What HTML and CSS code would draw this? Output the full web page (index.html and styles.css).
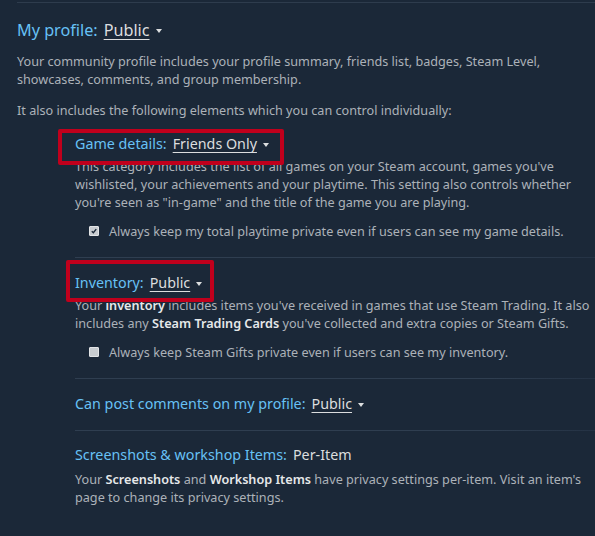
FILE: index.html
```html
<!DOCTYPE html>
<html>
<head>
<meta charset="utf-8">
<link rel="stylesheet" href="styles.css">
</head>
<body>
<div class="page">
  <div class="toprule"></div>
  <h1 class="title"><span class="label">My profile:</span> <span class="value link">Public</span><span class="caret"></span></h1>
  <p class="text p1">Your community profile includes your profile summary, friends list, badges, Steam Level, showcases, comments, and group membership.</p>
  <p class="text p2">It also includes the following elements which you can control individually:</p>

  <div class="sub">
    <div class="item">
      <div class="head"><span class="label">Game details:</span> <span class="value link">Friends Only</span><span class="caret"></span></div>
      <p class="text desc">This category includes the list of all games on your Steam account, games you've wishlisted, your achievements and your playtime. This setting also controls whether you're seen as "in-game" and the title of the game you are playing.</p>
      <label class="check"><span class="box checked"><svg viewBox="0 0 10 10" width="10" height="10"><path d="M2.2 5.3 L4.2 7.2 L7.8 2.6" fill="none" stroke="#1b2838" stroke-width="1.8"/></svg></span>Always keep my total playtime private even if users can see my game details.</label>
    </div>
    <div class="sep"></div>
    <div class="item">
      <div class="head"><span class="label">Inventory:</span> <span class="value link">Public</span><span class="caret"></span></div>
      <p class="text desc">Your <b>inventory</b> includes items you've received in games that use Steam Trading. It also includes any <b>Steam Trading Cards</b> you've collected and extra copies or Steam Gifts.</p>
      <label class="check"><span class="box"></span>Always keep Steam Gifts private even if users can see my inventory.</label>
    </div>
    <div class="sep"></div>
    <div class="item">
      <div class="head"><span class="label">Can post comments on my profile:</span> <span class="value link">Public</span><span class="caret"></span></div>
    </div>
    <div class="sep sep-last"></div>
    <div class="item">
      <div class="head"><span class="label">Screenshots &amp; workshop Items:</span> <span class="value">Per-Item</span></div>
      <p class="text desc d2">Your <b>Screenshots</b> and <b>Workshop Items</b> have privacy settings per-item. Visit an item's page to change its privacy settings.</p>
    </div>
  </div>

  <div class="mark mark1"></div>
  <div class="mark mark2"></div>
</div>
</body>
</html>
```
FILE: styles.css
```css
html, body {
  margin: 0;
  padding: 0;
  background: #1b2838;
}
body {
  font-family: "Noto Sans", "Open Sans", sans-serif;
  width: 595px;
  height: 536px;
  overflow: hidden;
}
.page {
  position: relative;
  padding: 0 5px 0 17px;
}
.toprule {
  height: 1px;
  margin-top: 2px;
  margin-right: -5px;
  background: #2e3c4d;
}
.title {
  margin: 15px 0 0 0;
  font-size: 16.2px;
  line-height: 24px;
  font-weight: normal;
  display: flex;
  align-items: center;
}
.label {
  color: #67c1f5;
}
.value {
  color: #dcdedf;
  margin-left: 6px;
}
.link {
  text-decoration: underline;
  text-underline-offset: 3px;
  text-decoration-thickness: 1px;
}
.caret {
  display: inline-block;
  width: 0;
  height: 0;
  border-left: 3.5px solid transparent;
  border-right: 3.5px solid transparent;
  border-top: 4px solid #dcdedf;
  margin-left: 6px;
  margin-top: 2px;
}
.text {
  color: #acb2b8;
  font-size: 12.65px;
  line-height: 18px;
  margin: 0;
}
.text b {
  color: #e6e8ea;
  font-weight: 600;
}
.p1 {
  margin-top: 10px;
}
.p2 {
  margin-top: 13px;
}
.sub {
  margin-left: 58px;
  margin-top: 15px;
}
.head {
  font-size: 14.3px;
  line-height: 20px;
  display: flex;
  align-items: center;
}
.desc {
  margin-top: 3px;
}
.desc.d2 {
  margin-top: 5px;
}
.check {
  display: flex;
  align-items: center;
  margin: 11px 0 0 14px;
  font-size: 12.65px;
  line-height: 18px;
  color: #acb2b8;
}
.box {
  width: 10px;
  height: 10px;
  box-sizing: border-box;
  background: #c8ccd0;
  border: 1px solid #e2e4e6;
  border-radius: 1px;
  margin-right: 10px;
  display: flex;
  align-items: center;
  justify-content: center;
}
.box svg {
  display: block;
}
.sep {
  height: 1px;
  margin: 17px -5px 15px 0;
  background: linear-gradient(to right, #2f3e50 0%, #2f3e50 80%, #243244 100%);
}
.sep.sep-last {
  margin-top: 16px;
  margin-bottom: 14px;
}
.mark {
  position: absolute;
  border: 4px solid #c0001c;
  border-radius: 2px;
  box-sizing: border-box;
}
.mark1 {
  left: 58px;
  top: 127px;
  width: 226px;
  height: 36px;
}
.mark2 {
  left: 66px;
  top: 258px;
  width: 148px;
  height: 42px;
}
```
